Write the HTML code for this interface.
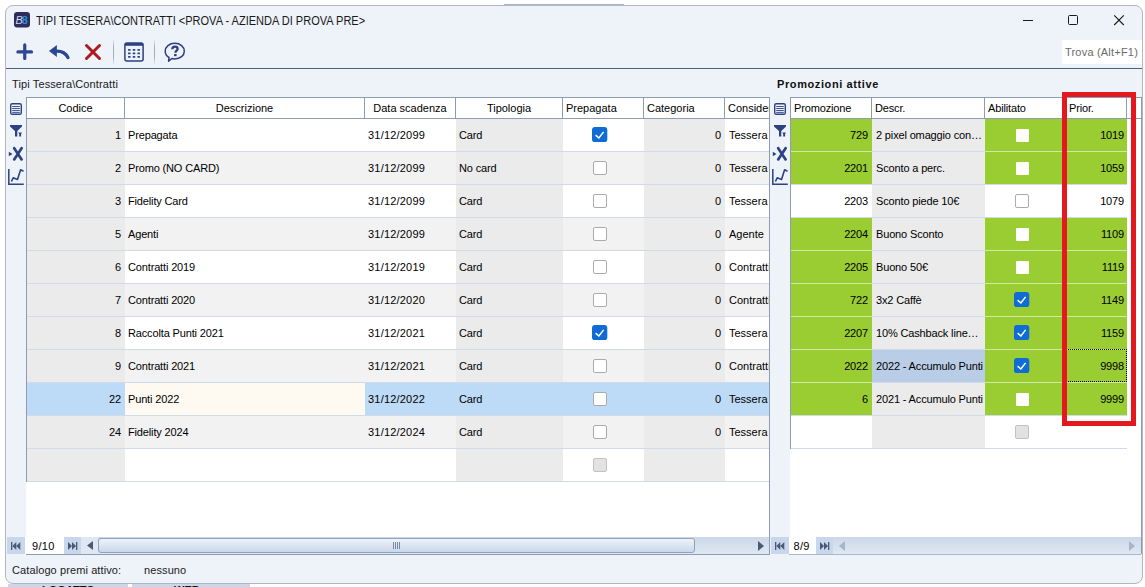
<!DOCTYPE html><html><head><meta charset="utf-8"><style>
html,body{margin:0;padding:0;}
body{width:1145px;height:587px;overflow:hidden;position:relative;background:#fff;font-family:"Liberation Sans", sans-serif;}
body div, body svg{position:absolute;}
</style></head><body>
<div style="left:8px;top:584px;width:120px;height:3px;background:#c6d8ee;"></div>
<div style="left:132px;top:584px;width:118px;height:3px;background:#c6d8ee;"></div>
<div style="left:8px;top:584px;width:120px;height:3px;overflow:hidden"><div style="left:34px;top:0.5px;font-size:11px;font-weight:700;line-height:11px;color:#111;white-space:pre">LOGATTO</div></div>
<div style="left:132px;top:584px;width:118px;height:3px;overflow:hidden"><div style="left:42px;top:0.5px;font-size:11px;font-weight:700;line-height:11px;color:#111;white-space:pre">WEB</div></div>
<div style="left:504px;top:4px;width:120px;height:2px;background:#a9b9d0;"></div>
<div style="left:5px;top:5px;width:1136px;height:577px;background:#eef2f9;border:1px solid #b3b6ba;border-radius:8px;"></div>
<svg style="left:14px;top:12px" width="16" height="16" viewBox="0 0 16 16">
<rect x="0" y="0" width="16" height="15.5" rx="3.2" fill="#2e2b5e"/>
<text x="1.6" y="12.2" font-family="Liberation Sans" font-size="11" font-style="italic" font-weight="400" fill="#d8d8e6">B</text>
<text x="7.8" y="12.2" font-family="Liberation Sans" font-size="11" font-weight="700" fill="#2590d8">8</text>
</svg>
<div style="left:36px;top:15px;font-size:12px;line-height:13px;color:#1a1a1a;font-weight:400;white-space:pre;transform:scaleX(0.918);transform-origin:0 0;">TIPI TESSERA\CONTRATTI &lt;PROVA - AZIENDA DI PROVA PRE&gt;</div>
<div style="left:1023px;top:20px;width:10px;height:1px;background:#1a1a1a;"></div>
<div style="left:1068px;top:15px;width:8px;height:8px;background:transparent;border:1px solid #1a1a1a;border-radius:1.5px;"></div>
<svg style="left:1113px;top:15px" width="12" height="11" viewBox="0 0 12 11"><path d="M1.2 0.4 L10.8 10 M10.8 0.4 L1.2 10" stroke="#1a1a1a" stroke-width="1.1"/></svg>
<svg style="left:12px;top:40px" width="28" height="24" viewBox="12 40 28 24"><path d="M24.75 44.9 V58.4 M17.9 51.9 H31.5" stroke="#2b4791" stroke-width="3.2" stroke-linecap="round"/></svg>
<svg style="left:44px;top:40px" width="30" height="24" viewBox="44 40 30 24"><path d="M48.9 51 L56.9 44.9 L56.9 56.9 Z" fill="#2b4791"/><path d="M56 51.1 C61.5 50.9 65.8 53 68 57.6" fill="none" stroke="#2b4791" stroke-width="3.3" stroke-linecap="round"/></svg>
<svg style="left:84px;top:43px" width="18" height="18" viewBox="0 0 18 18"><path d="M2.5 2.5 L15.5 15.5 M15.5 2.5 L2.5 15.5" stroke="#ad1b20" stroke-width="3" stroke-linecap="round"/></svg>
<div style="left:113px;top:40px;width:1px;height:24px;background:#a4adbb;background:linear-gradient(rgba(164,173,187,0.2),#a4adbb 30%,#a4adbb 70%,rgba(164,173,187,0.2));"></div>
<svg style="left:124px;top:42px" width="20" height="20" viewBox="0 0 20 20">
<rect x="0.9" y="0.9" width="18.2" height="18.2" rx="2" fill="none" stroke="#2d4283" stroke-width="1.5"/>
<rect x="1" y="1" width="18" height="2.8" fill="#2d4283"/>
<g fill="#2d4283"><rect x="4" y="6.9" width="2.6" height="1.8" rx="0.5"/><rect x="8.7" y="6.9" width="2.6" height="1.8" rx="0.5"/><rect x="13.4" y="6.9" width="2.6" height="1.8" rx="0.5"/>
<rect x="4" y="10.4" width="2.6" height="1.8" rx="0.5"/><rect x="8.7" y="10.4" width="2.6" height="1.8" rx="0.5"/><rect x="13.4" y="10.4" width="2.6" height="1.8" rx="0.5"/>
<rect x="4" y="14" width="2.6" height="1.8" rx="0.5"/><rect x="8.7" y="14" width="2.6" height="1.8" rx="0.5"/><rect x="13.4" y="14" width="2.6" height="1.8" rx="0.5"/></g>
</svg>
<div style="left:154px;top:40px;width:1px;height:24px;background:#a4adbb;background:linear-gradient(rgba(164,173,187,0.2),#a4adbb 30%,#a4adbb 70%,rgba(164,173,187,0.2));"></div>
<svg style="left:164px;top:42px" width="22" height="21" viewBox="0 0 22 21">
<path d="M5 15.5 C2.5 14 1.2 11.8 1.2 9.2 C1.2 4.8 5.3 1.3 10.8 1.3 C16.3 1.3 20.3 4.8 20.3 9.2 C20.3 13.6 16.3 16.9 10.8 16.9 C9.8 16.9 8.8 16.8 7.9 16.5 L4.6 19.2 Z" fill="none" stroke="#2d3f82" stroke-width="1.5" stroke-linejoin="round"/>
<path d="M8.3 7.3 C8.3 5.5 9.5 4.6 11 4.6 C12.5 4.6 13.6 5.6 13.6 6.9 C13.6 8.7 11.4 8.7 11.4 10.8" fill="none" stroke="#2d3f82" stroke-width="2.3"/>
<rect x="10.1" y="12" width="2.5" height="2.2" fill="#2d3f82"/>
</svg>
<div style="left:1062px;top:40px;width:80px;height:24px;background:#ffffff;"></div>
<div style="left:1065px;top:46px;font-size:11px;line-height:13px;color:#6b6b6b;font-weight:400;white-space:pre;letter-spacing:0.2px;">Trova (Alt+F1)</div>
<div style="left:6px;top:68px;width:1136px;height:1px;background:#4d617c;"></div>
<div style="left:12px;top:78px;font-size:11px;line-height:13px;color:#1a1a1a;font-weight:400;white-space:pre;letter-spacing:0.12px;">Tipi Tessera\Contratti</div>
<div style="left:777px;top:78px;font-size:11px;line-height:13px;color:#111;font-weight:700;white-space:pre;letter-spacing:0.6px;">Promozioni attive</div>
<svg style="left:5px;top:97px" width="22" height="92" viewBox="5 97 22 92">
<rect x="10.7" y="103.7" width="10.6" height="10.6" rx="1.6" fill="none" stroke="#2c4283" stroke-width="1.4"/>
<path d="M12.2 106.5 H19.8 M12.2 108.5 H19.8 M12.2 110.5 H19.8 M12.2 112.4 H19.8" stroke="#2c4283" stroke-width="0.9"/>
<path d="M10 125 H22 V126.6 L17.3 131 V136.5 H15 V131 L10 126.6 Z" fill="#2c4283"/>
<path d="M18.2 132.6 H22 L21.1 134 V136.5 H19.2 V134 Z" fill="#2c4283"/>
<path d="M8.8 151.8 L12.5 154 L8.8 156.2 Z" fill="#2c4283"/>
<path d="M14.2 148.2 L21.6 159.4 M21.6 148.2 L14.2 159.4" stroke="#2c4283" stroke-width="2.7" stroke-linecap="round"/>
<path d="M8.8 169 V184.3 H23.8" fill="none" stroke="#2c4283" stroke-width="1.5"/>
<path d="M11.4 181.5 L13.2 177.8 L17.5 179.4 L20.6 169.8 L23.5 171.2" fill="none" stroke="#2c4283" stroke-width="1.6" stroke-linejoin="round"/>
</svg>
<svg style="left:769px;top:97px" width="22" height="92" viewBox="5 97 22 92">
<rect x="10.7" y="103.7" width="10.6" height="10.6" rx="1.6" fill="none" stroke="#2c4283" stroke-width="1.4"/>
<path d="M12.2 106.5 H19.8 M12.2 108.5 H19.8 M12.2 110.5 H19.8 M12.2 112.4 H19.8" stroke="#2c4283" stroke-width="0.9"/>
<path d="M10 125 H22 V126.6 L17.3 131 V136.5 H15 V131 L10 126.6 Z" fill="#2c4283"/>
<path d="M18.2 132.6 H22 L21.1 134 V136.5 H19.2 V134 Z" fill="#2c4283"/>
<path d="M8.8 151.8 L12.5 154 L8.8 156.2 Z" fill="#2c4283"/>
<path d="M14.2 148.2 L21.6 159.4 M21.6 148.2 L14.2 159.4" stroke="#2c4283" stroke-width="2.7" stroke-linecap="round"/>
<path d="M8.8 169 V184.3 H23.8" fill="none" stroke="#2c4283" stroke-width="1.5"/>
<path d="M11.4 181.5 L13.2 177.8 L17.5 179.4 L20.6 169.8 L23.5 171.2" fill="none" stroke="#2c4283" stroke-width="1.6" stroke-linejoin="round"/>
</svg>
<div style="left:27px;top:119px;width:742px;height:418px;background:#ffffff;"></div>
<div style="left:27px;top:119px;width:98px;height:32px;background:#ebebeb;"></div>
<div style="left:125px;top:119px;width:240px;height:32px;background:#ffffff;"></div>
<div style="left:365px;top:119px;width:91px;height:32px;background:#ffffff;"></div>
<div style="left:456px;top:119px;width:107px;height:32px;background:#ebebeb;"></div>
<div style="left:563px;top:119px;width:81px;height:32px;background:#ffffff;"></div>
<div style="left:644px;top:119px;width:81px;height:32px;background:#ebebeb;"></div>
<div style="left:725px;top:119px;width:44px;height:32px;background:#ffffff;"></div>
<div style="left:27px;top:151px;width:742px;height:1px;background:#cfdbe9;"></div>
<div style="left:27px;top:152px;width:98px;height:32px;background:#ebebeb;"></div>
<div style="left:125px;top:152px;width:240px;height:32px;background:#f2f2f2;"></div>
<div style="left:365px;top:152px;width:91px;height:32px;background:#f2f2f2;"></div>
<div style="left:456px;top:152px;width:107px;height:32px;background:#ebebeb;"></div>
<div style="left:563px;top:152px;width:81px;height:32px;background:#f2f2f2;"></div>
<div style="left:644px;top:152px;width:81px;height:32px;background:#ebebeb;"></div>
<div style="left:725px;top:152px;width:44px;height:32px;background:#f2f2f2;"></div>
<div style="left:27px;top:184px;width:742px;height:1px;background:#cfdbe9;"></div>
<div style="left:27px;top:185px;width:98px;height:32px;background:#ebebeb;"></div>
<div style="left:125px;top:185px;width:240px;height:32px;background:#ffffff;"></div>
<div style="left:365px;top:185px;width:91px;height:32px;background:#ffffff;"></div>
<div style="left:456px;top:185px;width:107px;height:32px;background:#ebebeb;"></div>
<div style="left:563px;top:185px;width:81px;height:32px;background:#ffffff;"></div>
<div style="left:644px;top:185px;width:81px;height:32px;background:#ebebeb;"></div>
<div style="left:725px;top:185px;width:44px;height:32px;background:#ffffff;"></div>
<div style="left:27px;top:217px;width:742px;height:1px;background:#cfdbe9;"></div>
<div style="left:27px;top:218px;width:98px;height:32px;background:#ebebeb;"></div>
<div style="left:125px;top:218px;width:240px;height:32px;background:#f2f2f2;"></div>
<div style="left:365px;top:218px;width:91px;height:32px;background:#f2f2f2;"></div>
<div style="left:456px;top:218px;width:107px;height:32px;background:#ebebeb;"></div>
<div style="left:563px;top:218px;width:81px;height:32px;background:#f2f2f2;"></div>
<div style="left:644px;top:218px;width:81px;height:32px;background:#ebebeb;"></div>
<div style="left:725px;top:218px;width:44px;height:32px;background:#f2f2f2;"></div>
<div style="left:27px;top:250px;width:742px;height:1px;background:#cfdbe9;"></div>
<div style="left:27px;top:251px;width:98px;height:32px;background:#ebebeb;"></div>
<div style="left:125px;top:251px;width:240px;height:32px;background:#ffffff;"></div>
<div style="left:365px;top:251px;width:91px;height:32px;background:#ffffff;"></div>
<div style="left:456px;top:251px;width:107px;height:32px;background:#ebebeb;"></div>
<div style="left:563px;top:251px;width:81px;height:32px;background:#ffffff;"></div>
<div style="left:644px;top:251px;width:81px;height:32px;background:#ebebeb;"></div>
<div style="left:725px;top:251px;width:44px;height:32px;background:#ffffff;"></div>
<div style="left:27px;top:283px;width:742px;height:1px;background:#cfdbe9;"></div>
<div style="left:27px;top:284px;width:98px;height:32px;background:#ebebeb;"></div>
<div style="left:125px;top:284px;width:240px;height:32px;background:#f2f2f2;"></div>
<div style="left:365px;top:284px;width:91px;height:32px;background:#f2f2f2;"></div>
<div style="left:456px;top:284px;width:107px;height:32px;background:#ebebeb;"></div>
<div style="left:563px;top:284px;width:81px;height:32px;background:#f2f2f2;"></div>
<div style="left:644px;top:284px;width:81px;height:32px;background:#ebebeb;"></div>
<div style="left:725px;top:284px;width:44px;height:32px;background:#f2f2f2;"></div>
<div style="left:27px;top:316px;width:742px;height:1px;background:#cfdbe9;"></div>
<div style="left:27px;top:317px;width:98px;height:32px;background:#ebebeb;"></div>
<div style="left:125px;top:317px;width:240px;height:32px;background:#ffffff;"></div>
<div style="left:365px;top:317px;width:91px;height:32px;background:#ffffff;"></div>
<div style="left:456px;top:317px;width:107px;height:32px;background:#ebebeb;"></div>
<div style="left:563px;top:317px;width:81px;height:32px;background:#ffffff;"></div>
<div style="left:644px;top:317px;width:81px;height:32px;background:#ebebeb;"></div>
<div style="left:725px;top:317px;width:44px;height:32px;background:#ffffff;"></div>
<div style="left:27px;top:349px;width:742px;height:1px;background:#cfdbe9;"></div>
<div style="left:27px;top:350px;width:98px;height:32px;background:#ebebeb;"></div>
<div style="left:125px;top:350px;width:240px;height:32px;background:#f2f2f2;"></div>
<div style="left:365px;top:350px;width:91px;height:32px;background:#f2f2f2;"></div>
<div style="left:456px;top:350px;width:107px;height:32px;background:#ebebeb;"></div>
<div style="left:563px;top:350px;width:81px;height:32px;background:#f2f2f2;"></div>
<div style="left:644px;top:350px;width:81px;height:32px;background:#ebebeb;"></div>
<div style="left:725px;top:350px;width:44px;height:32px;background:#f2f2f2;"></div>
<div style="left:27px;top:382px;width:742px;height:1px;background:#cfdbe9;"></div>
<div style="left:27px;top:383px;width:98px;height:32px;background:#bddaf6;"></div>
<div style="left:125px;top:383px;width:240px;height:32px;background:#fef9f1;"></div>
<div style="left:365px;top:383px;width:91px;height:32px;background:#bddaf6;"></div>
<div style="left:456px;top:383px;width:107px;height:32px;background:#bddaf6;"></div>
<div style="left:563px;top:383px;width:81px;height:32px;background:#bddaf6;"></div>
<div style="left:644px;top:383px;width:81px;height:32px;background:#bddaf6;"></div>
<div style="left:725px;top:383px;width:44px;height:32px;background:#bddaf6;"></div>
<div style="left:27px;top:415px;width:742px;height:1px;background:#cfdbe9;"></div>
<div style="left:27px;top:416px;width:98px;height:32px;background:#ebebeb;"></div>
<div style="left:125px;top:416px;width:240px;height:32px;background:#f2f2f2;"></div>
<div style="left:365px;top:416px;width:91px;height:32px;background:#f2f2f2;"></div>
<div style="left:456px;top:416px;width:107px;height:32px;background:#ebebeb;"></div>
<div style="left:563px;top:416px;width:81px;height:32px;background:#f2f2f2;"></div>
<div style="left:644px;top:416px;width:81px;height:32px;background:#ebebeb;"></div>
<div style="left:725px;top:416px;width:44px;height:32px;background:#f2f2f2;"></div>
<div style="left:27px;top:448px;width:742px;height:1px;background:#cfdbe9;"></div>
<div style="left:27px;top:449px;width:98px;height:32px;background:#ebebeb;"></div>
<div style="left:125px;top:449px;width:240px;height:32px;background:#ffffff;"></div>
<div style="left:365px;top:449px;width:91px;height:32px;background:#ffffff;"></div>
<div style="left:456px;top:449px;width:107px;height:32px;background:#ebebeb;"></div>
<div style="left:563px;top:449px;width:81px;height:32px;background:#ffffff;"></div>
<div style="left:644px;top:449px;width:81px;height:32px;background:#ebebeb;"></div>
<div style="left:725px;top:449px;width:44px;height:32px;background:#ffffff;"></div>
<div style="left:27px;top:481px;width:742px;height:1px;background:#cfdbe9;"></div>
<div style="left:27px;top:119px;width:742px;height:418px;overflow:hidden">
<div style="left:4px;width:90px;text-align:right;top:10px;font-size:11px;line-height:13px;color:#000;font-weight:400;white-space:pre;letter-spacing:-0.15px;">1</div>
<div style="left:101px;top:10px;font-size:11px;line-height:13px;color:#000;font-weight:400;white-space:pre;letter-spacing:-0.15px;">Prepagata</div>
<div style="left:341px;top:10px;font-size:11px;line-height:13px;color:#000;font-weight:400;white-space:pre;letter-spacing:0.2px;">31/12/2099</div>
<div style="left:432px;top:10px;font-size:11px;line-height:13px;color:#000;font-weight:400;white-space:pre;letter-spacing:-0.15px;">Card</div>
<div style="left:634px;width:60px;text-align:right;top:10px;font-size:11px;line-height:13px;color:#000;font-weight:400;white-space:pre;letter-spacing:-0.15px;">0</div>
<div style="left:702px;top:10px;font-size:11px;line-height:13px;color:#000;font-weight:400;white-space:pre;letter-spacing:0px;">Tessera</div>
<div style="left:4px;width:90px;text-align:right;top:43px;font-size:11px;line-height:13px;color:#000;font-weight:400;white-space:pre;letter-spacing:-0.15px;">2</div>
<div style="left:101px;top:43px;font-size:11px;line-height:13px;color:#000;font-weight:400;white-space:pre;letter-spacing:-0.15px;">Promo (NO CARD)</div>
<div style="left:341px;top:43px;font-size:11px;line-height:13px;color:#000;font-weight:400;white-space:pre;letter-spacing:0.2px;">31/12/2099</div>
<div style="left:432px;top:43px;font-size:11px;line-height:13px;color:#000;font-weight:400;white-space:pre;letter-spacing:-0.15px;">No card</div>
<div style="left:634px;width:60px;text-align:right;top:43px;font-size:11px;line-height:13px;color:#000;font-weight:400;white-space:pre;letter-spacing:-0.15px;">0</div>
<div style="left:702px;top:43px;font-size:11px;line-height:13px;color:#000;font-weight:400;white-space:pre;letter-spacing:0px;">Tessera</div>
<div style="left:4px;width:90px;text-align:right;top:76px;font-size:11px;line-height:13px;color:#000;font-weight:400;white-space:pre;letter-spacing:-0.15px;">3</div>
<div style="left:101px;top:76px;font-size:11px;line-height:13px;color:#000;font-weight:400;white-space:pre;letter-spacing:-0.15px;">Fidelity Card</div>
<div style="left:341px;top:76px;font-size:11px;line-height:13px;color:#000;font-weight:400;white-space:pre;letter-spacing:0.2px;">31/12/2099</div>
<div style="left:432px;top:76px;font-size:11px;line-height:13px;color:#000;font-weight:400;white-space:pre;letter-spacing:-0.15px;">Card</div>
<div style="left:634px;width:60px;text-align:right;top:76px;font-size:11px;line-height:13px;color:#000;font-weight:400;white-space:pre;letter-spacing:-0.15px;">0</div>
<div style="left:702px;top:76px;font-size:11px;line-height:13px;color:#000;font-weight:400;white-space:pre;letter-spacing:0px;">Tessera</div>
<div style="left:4px;width:90px;text-align:right;top:109px;font-size:11px;line-height:13px;color:#000;font-weight:400;white-space:pre;letter-spacing:-0.15px;">5</div>
<div style="left:101px;top:109px;font-size:11px;line-height:13px;color:#000;font-weight:400;white-space:pre;letter-spacing:-0.15px;">Agenti</div>
<div style="left:341px;top:109px;font-size:11px;line-height:13px;color:#000;font-weight:400;white-space:pre;letter-spacing:0.2px;">31/12/2099</div>
<div style="left:432px;top:109px;font-size:11px;line-height:13px;color:#000;font-weight:400;white-space:pre;letter-spacing:-0.15px;">Card</div>
<div style="left:634px;width:60px;text-align:right;top:109px;font-size:11px;line-height:13px;color:#000;font-weight:400;white-space:pre;letter-spacing:-0.15px;">0</div>
<div style="left:702px;top:109px;font-size:11px;line-height:13px;color:#000;font-weight:400;white-space:pre;letter-spacing:0px;">Agente</div>
<div style="left:4px;width:90px;text-align:right;top:142px;font-size:11px;line-height:13px;color:#000;font-weight:400;white-space:pre;letter-spacing:-0.15px;">6</div>
<div style="left:101px;top:142px;font-size:11px;line-height:13px;color:#000;font-weight:400;white-space:pre;letter-spacing:-0.15px;">Contratti 2019</div>
<div style="left:341px;top:142px;font-size:11px;line-height:13px;color:#000;font-weight:400;white-space:pre;letter-spacing:0.2px;">31/12/2019</div>
<div style="left:432px;top:142px;font-size:11px;line-height:13px;color:#000;font-weight:400;white-space:pre;letter-spacing:-0.15px;">Card</div>
<div style="left:634px;width:60px;text-align:right;top:142px;font-size:11px;line-height:13px;color:#000;font-weight:400;white-space:pre;letter-spacing:-0.15px;">0</div>
<div style="left:702px;top:142px;font-size:11px;line-height:13px;color:#000;font-weight:400;white-space:pre;letter-spacing:0px;">Contratti</div>
<div style="left:4px;width:90px;text-align:right;top:175px;font-size:11px;line-height:13px;color:#000;font-weight:400;white-space:pre;letter-spacing:-0.15px;">7</div>
<div style="left:101px;top:175px;font-size:11px;line-height:13px;color:#000;font-weight:400;white-space:pre;letter-spacing:-0.15px;">Contratti 2020</div>
<div style="left:341px;top:175px;font-size:11px;line-height:13px;color:#000;font-weight:400;white-space:pre;letter-spacing:0.2px;">31/12/2020</div>
<div style="left:432px;top:175px;font-size:11px;line-height:13px;color:#000;font-weight:400;white-space:pre;letter-spacing:-0.15px;">Card</div>
<div style="left:634px;width:60px;text-align:right;top:175px;font-size:11px;line-height:13px;color:#000;font-weight:400;white-space:pre;letter-spacing:-0.15px;">0</div>
<div style="left:702px;top:175px;font-size:11px;line-height:13px;color:#000;font-weight:400;white-space:pre;letter-spacing:0px;">Contratti</div>
<div style="left:4px;width:90px;text-align:right;top:208px;font-size:11px;line-height:13px;color:#000;font-weight:400;white-space:pre;letter-spacing:-0.15px;">8</div>
<div style="left:101px;top:208px;font-size:11px;line-height:13px;color:#000;font-weight:400;white-space:pre;letter-spacing:-0.15px;">Raccolta Punti 2021</div>
<div style="left:341px;top:208px;font-size:11px;line-height:13px;color:#000;font-weight:400;white-space:pre;letter-spacing:0.2px;">31/12/2021</div>
<div style="left:432px;top:208px;font-size:11px;line-height:13px;color:#000;font-weight:400;white-space:pre;letter-spacing:-0.15px;">Card</div>
<div style="left:634px;width:60px;text-align:right;top:208px;font-size:11px;line-height:13px;color:#000;font-weight:400;white-space:pre;letter-spacing:-0.15px;">0</div>
<div style="left:702px;top:208px;font-size:11px;line-height:13px;color:#000;font-weight:400;white-space:pre;letter-spacing:0px;">Tessera</div>
<div style="left:4px;width:90px;text-align:right;top:241px;font-size:11px;line-height:13px;color:#000;font-weight:400;white-space:pre;letter-spacing:-0.15px;">9</div>
<div style="left:101px;top:241px;font-size:11px;line-height:13px;color:#000;font-weight:400;white-space:pre;letter-spacing:-0.15px;">Contratti 2021</div>
<div style="left:341px;top:241px;font-size:11px;line-height:13px;color:#000;font-weight:400;white-space:pre;letter-spacing:0.2px;">31/12/2021</div>
<div style="left:432px;top:241px;font-size:11px;line-height:13px;color:#000;font-weight:400;white-space:pre;letter-spacing:-0.15px;">Card</div>
<div style="left:634px;width:60px;text-align:right;top:241px;font-size:11px;line-height:13px;color:#000;font-weight:400;white-space:pre;letter-spacing:-0.15px;">0</div>
<div style="left:702px;top:241px;font-size:11px;line-height:13px;color:#000;font-weight:400;white-space:pre;letter-spacing:0px;">Contratti</div>
<div style="left:4px;width:90px;text-align:right;top:274px;font-size:11px;line-height:13px;color:#000;font-weight:400;white-space:pre;letter-spacing:-0.15px;">22</div>
<div style="left:101px;top:274px;font-size:11px;line-height:13px;color:#000;font-weight:400;white-space:pre;letter-spacing:-0.15px;">Punti 2022</div>
<div style="left:341px;top:274px;font-size:11px;line-height:13px;color:#000;font-weight:400;white-space:pre;letter-spacing:0.2px;">31/12/2022</div>
<div style="left:432px;top:274px;font-size:11px;line-height:13px;color:#000;font-weight:400;white-space:pre;letter-spacing:-0.15px;">Card</div>
<div style="left:634px;width:60px;text-align:right;top:274px;font-size:11px;line-height:13px;color:#000;font-weight:400;white-space:pre;letter-spacing:-0.15px;">0</div>
<div style="left:702px;top:274px;font-size:11px;line-height:13px;color:#000;font-weight:400;white-space:pre;letter-spacing:0px;">Tessera</div>
<div style="left:4px;width:90px;text-align:right;top:307px;font-size:11px;line-height:13px;color:#000;font-weight:400;white-space:pre;letter-spacing:-0.15px;">24</div>
<div style="left:101px;top:307px;font-size:11px;line-height:13px;color:#000;font-weight:400;white-space:pre;letter-spacing:-0.15px;">Fidelity 2024</div>
<div style="left:341px;top:307px;font-size:11px;line-height:13px;color:#000;font-weight:400;white-space:pre;letter-spacing:0.2px;">31/12/2024</div>
<div style="left:432px;top:307px;font-size:11px;line-height:13px;color:#000;font-weight:400;white-space:pre;letter-spacing:-0.15px;">Card</div>
<div style="left:634px;width:60px;text-align:right;top:307px;font-size:11px;line-height:13px;color:#000;font-weight:400;white-space:pre;letter-spacing:-0.15px;">0</div>
<div style="left:702px;top:307px;font-size:11px;line-height:13px;color:#000;font-weight:400;white-space:pre;letter-spacing:0px;">Tessera</div>
</div>
<svg style="left:592.3px;top:127.2px" width="15.3" height="15.3" viewBox="0 0 15.3 15.3"><rect x="0" y="0" width="15.3" height="15.3" rx="3" fill="#0f6cd5"/><path d="M3.6 8.1 L6.9 11 L11.6 4.9" fill="none" stroke="#fff" stroke-width="1.5"/></svg>
<div style="left:593px;top:161px;width:12px;height:12px;background:#fff;border:1px solid #ababab;border-radius:2px"></div>
<div style="left:593px;top:194px;width:12px;height:12px;background:#fff;border:1px solid #ababab;border-radius:2px"></div>
<div style="left:593px;top:227px;width:12px;height:12px;background:#fff;border:1px solid #ababab;border-radius:2px"></div>
<div style="left:593px;top:260px;width:12px;height:12px;background:#fff;border:1px solid #ababab;border-radius:2px"></div>
<div style="left:593px;top:293px;width:12px;height:12px;background:#fff;border:1px solid #ababab;border-radius:2px"></div>
<svg style="left:592.3px;top:325.2px" width="15.3" height="15.3" viewBox="0 0 15.3 15.3"><rect x="0" y="0" width="15.3" height="15.3" rx="3" fill="#0f6cd5"/><path d="M3.6 8.1 L6.9 11 L11.6 4.9" fill="none" stroke="#fff" stroke-width="1.5"/></svg>
<div style="left:593px;top:359px;width:12px;height:12px;background:#fff;border:1px solid #ababab;border-radius:2px"></div>
<div style="left:593px;top:392px;width:12px;height:12px;background:#fff;border:1px solid #ababab;border-radius:2px"></div>
<div style="left:593px;top:425px;width:12px;height:12px;background:#fff;border:1px solid #ababab;border-radius:2px"></div>
<div style="left:593px;top:458px;width:12px;height:12px;background:#e2e2e2;border:1px solid #c2c2c2;border-radius:2px"></div>
<div style="left:26px;top:97px;width:743px;height:22px;background:#ffffff;border-top:1px solid #8c9db3;border-bottom:1px solid #8c9db3;box-sizing:border-box;"></div>
<div style="left:26px;top:97px;width:1px;height:22px;background:#8c9db3;"></div>
<div style="left:124px;top:97px;width:1px;height:22px;background:#8c9db3;"></div>
<div style="left:364px;top:97px;width:1px;height:22px;background:#8c9db3;"></div>
<div style="left:455px;top:97px;width:1px;height:22px;background:#8c9db3;"></div>
<div style="left:562px;top:97px;width:1px;height:22px;background:#8c9db3;"></div>
<div style="left:643px;top:97px;width:1px;height:22px;background:#8c9db3;"></div>
<div style="left:724px;top:97px;width:1px;height:22px;background:#8c9db3;"></div>
<div style="left:769px;top:97px;width:1px;height:22px;background:#8c9db3;"></div>
<div style="left:27px;top:98px;width:742px;height:20px;overflow:hidden">
<div style="left:0px;width:97px;text-align:center;top:4px;font-size:11px;line-height:13px;color:#000;font-weight:400;white-space:pre;letter-spacing:0px;">Codice</div>
<div style="left:98px;width:239px;text-align:center;top:4px;font-size:11px;line-height:13px;color:#000;font-weight:400;white-space:pre;letter-spacing:0px;">Descrizione</div>
<div style="left:338px;width:90px;text-align:center;top:4px;font-size:11px;line-height:13px;color:#000;font-weight:400;white-space:pre;letter-spacing:0px;">Data scadenza</div>
<div style="left:429px;width:106px;text-align:center;top:4px;font-size:11px;line-height:13px;color:#000;font-weight:400;white-space:pre;letter-spacing:0px;">Tipologia</div>
<div style="left:539px;top:4px;font-size:11px;line-height:13px;color:#000;font-weight:400;white-space:pre;letter-spacing:0px;">Prepagata</div>
<div style="left:620px;top:4px;font-size:11px;line-height:13px;color:#000;font-weight:400;white-space:pre;letter-spacing:0px;">Categoria</div>
<div style="left:701px;top:4px;font-size:11px;line-height:13px;color:#000;font-weight:400;white-space:pre;letter-spacing:0px;">Consider</div>
</div>
<div style="left:26px;top:97px;width:1px;height:385px;background:#8c9db3;"></div>
<div style="left:769px;top:97px;width:1px;height:457px;background:#8c9db3;"></div>
<div style="left:26px;top:482px;width:743px;height:55px;background:#ffffff;"></div>
<div style="left:791px;top:119px;width:350px;height:418px;background:#ffffff;"></div>
<div style="left:791px;top:119px;width:81px;height:32px;background:#9acd32;"></div>
<div style="left:872px;top:119px;width:113px;height:32px;background:#ebebeb;"></div>
<div style="left:985px;top:119px;width:81px;height:32px;background:#9acd32;"></div>
<div style="left:1066px;top:119px;width:61px;height:32px;background:#9acd32;"></div>
<div style="left:791px;top:151px;width:81px;height:1px;background:#d0e7a6;"></div>
<div style="left:872px;top:151px;width:113px;height:1px;background:#cfdbe9;"></div>
<div style="left:985px;top:151px;width:142px;height:1px;background:#d0e7a6;"></div>
<div style="left:791px;top:152px;width:81px;height:32px;background:#9acd32;"></div>
<div style="left:872px;top:152px;width:113px;height:32px;background:#ebebeb;"></div>
<div style="left:985px;top:152px;width:81px;height:32px;background:#9acd32;"></div>
<div style="left:1066px;top:152px;width:61px;height:32px;background:#9acd32;"></div>
<div style="left:791px;top:184px;width:81px;height:1px;background:#cfdbe9;"></div>
<div style="left:872px;top:184px;width:113px;height:1px;background:#cfdbe9;"></div>
<div style="left:985px;top:184px;width:142px;height:1px;background:#cfdbe9;"></div>
<div style="left:791px;top:185px;width:81px;height:32px;background:#ffffff;"></div>
<div style="left:872px;top:185px;width:113px;height:32px;background:#ebebeb;"></div>
<div style="left:985px;top:185px;width:81px;height:32px;background:#ffffff;"></div>
<div style="left:1066px;top:185px;width:61px;height:32px;background:#ffffff;"></div>
<div style="left:791px;top:217px;width:81px;height:1px;background:#cfdbe9;"></div>
<div style="left:872px;top:217px;width:113px;height:1px;background:#cfdbe9;"></div>
<div style="left:985px;top:217px;width:142px;height:1px;background:#cfdbe9;"></div>
<div style="left:791px;top:218px;width:81px;height:32px;background:#9acd32;"></div>
<div style="left:872px;top:218px;width:113px;height:32px;background:#ebebeb;"></div>
<div style="left:985px;top:218px;width:81px;height:32px;background:#9acd32;"></div>
<div style="left:1066px;top:218px;width:61px;height:32px;background:#9acd32;"></div>
<div style="left:791px;top:250px;width:81px;height:1px;background:#d0e7a6;"></div>
<div style="left:872px;top:250px;width:113px;height:1px;background:#cfdbe9;"></div>
<div style="left:985px;top:250px;width:142px;height:1px;background:#d0e7a6;"></div>
<div style="left:791px;top:251px;width:81px;height:32px;background:#9acd32;"></div>
<div style="left:872px;top:251px;width:113px;height:32px;background:#ebebeb;"></div>
<div style="left:985px;top:251px;width:81px;height:32px;background:#9acd32;"></div>
<div style="left:1066px;top:251px;width:61px;height:32px;background:#9acd32;"></div>
<div style="left:791px;top:283px;width:81px;height:1px;background:#d0e7a6;"></div>
<div style="left:872px;top:283px;width:113px;height:1px;background:#cfdbe9;"></div>
<div style="left:985px;top:283px;width:142px;height:1px;background:#d0e7a6;"></div>
<div style="left:791px;top:284px;width:81px;height:32px;background:#9acd32;"></div>
<div style="left:872px;top:284px;width:113px;height:32px;background:#ebebeb;"></div>
<div style="left:985px;top:284px;width:81px;height:32px;background:#9acd32;"></div>
<div style="left:1066px;top:284px;width:61px;height:32px;background:#9acd32;"></div>
<div style="left:791px;top:316px;width:81px;height:1px;background:#d0e7a6;"></div>
<div style="left:872px;top:316px;width:113px;height:1px;background:#cfdbe9;"></div>
<div style="left:985px;top:316px;width:142px;height:1px;background:#d0e7a6;"></div>
<div style="left:791px;top:317px;width:81px;height:32px;background:#9acd32;"></div>
<div style="left:872px;top:317px;width:113px;height:32px;background:#ebebeb;"></div>
<div style="left:985px;top:317px;width:81px;height:32px;background:#9acd32;"></div>
<div style="left:1066px;top:317px;width:61px;height:32px;background:#9acd32;"></div>
<div style="left:791px;top:349px;width:81px;height:1px;background:#d0e7a6;"></div>
<div style="left:872px;top:349px;width:113px;height:1px;background:#cfdbe9;"></div>
<div style="left:985px;top:349px;width:142px;height:1px;background:#d0e7a6;"></div>
<div style="left:791px;top:350px;width:81px;height:32px;background:#9acd32;"></div>
<div style="left:872px;top:350px;width:113px;height:32px;background:#b9cee6;"></div>
<div style="left:985px;top:350px;width:81px;height:32px;background:#9acd32;"></div>
<div style="left:1066px;top:350px;width:61px;height:32px;background:#9acd32;"></div>
<div style="left:791px;top:382px;width:81px;height:1px;background:#d0e7a6;"></div>
<div style="left:872px;top:382px;width:113px;height:1px;background:#cfdbe9;"></div>
<div style="left:985px;top:382px;width:142px;height:1px;background:#d0e7a6;"></div>
<div style="left:791px;top:383px;width:81px;height:32px;background:#9acd32;"></div>
<div style="left:872px;top:383px;width:113px;height:32px;background:#ebebeb;"></div>
<div style="left:985px;top:383px;width:81px;height:32px;background:#9acd32;"></div>
<div style="left:1066px;top:383px;width:61px;height:32px;background:#9acd32;"></div>
<div style="left:791px;top:415px;width:81px;height:1px;background:#cfdbe9;"></div>
<div style="left:872px;top:415px;width:113px;height:1px;background:#cfdbe9;"></div>
<div style="left:985px;top:415px;width:142px;height:1px;background:#cfdbe9;"></div>
<div style="left:791px;top:416px;width:81px;height:32px;background:#ffffff;"></div>
<div style="left:872px;top:416px;width:113px;height:32px;background:#ebebeb;"></div>
<div style="left:985px;top:416px;width:81px;height:32px;background:#ffffff;"></div>
<div style="left:1066px;top:416px;width:61px;height:32px;background:#ffffff;"></div>
<div style="left:791px;top:448px;width:81px;height:1px;background:#cfdbe9;"></div>
<div style="left:872px;top:448px;width:113px;height:1px;background:#cfdbe9;"></div>
<div style="left:985px;top:448px;width:142px;height:1px;background:#cfdbe9;"></div>
<div style="left:798px;width:70px;text-align:right;top:129px;font-size:11px;line-height:13px;color:#000;font-weight:400;white-space:pre;letter-spacing:-0.15px;">729</div>
<div style="left:876px;top:129px;font-size:11px;line-height:13px;color:#000;font-weight:400;white-space:pre;letter-spacing:-0.15px;">2 pixel omaggio con…</div>
<div style="left:1074px;width:50px;text-align:right;top:129px;font-size:11px;line-height:13px;color:#000;font-weight:400;white-space:pre;letter-spacing:-0.15px;">1019</div>
<div style="left:1015.5px;top:128.5px;width:13px;height:13px;background:#fff;border-radius:1px"></div>
<div style="left:798px;width:70px;text-align:right;top:162px;font-size:11px;line-height:13px;color:#000;font-weight:400;white-space:pre;letter-spacing:-0.15px;">2201</div>
<div style="left:876px;top:162px;font-size:11px;line-height:13px;color:#000;font-weight:400;white-space:pre;letter-spacing:-0.15px;">Sconto a perc.</div>
<div style="left:1074px;width:50px;text-align:right;top:162px;font-size:11px;line-height:13px;color:#000;font-weight:400;white-space:pre;letter-spacing:-0.15px;">1059</div>
<div style="left:1015.5px;top:161.5px;width:13px;height:13px;background:#fff;border-radius:1px"></div>
<div style="left:798px;width:70px;text-align:right;top:195px;font-size:11px;line-height:13px;color:#000;font-weight:400;white-space:pre;letter-spacing:-0.15px;">2203</div>
<div style="left:876px;top:195px;font-size:11px;line-height:13px;color:#000;font-weight:400;white-space:pre;letter-spacing:-0.15px;">Sconto piede 10€</div>
<div style="left:1074px;width:50px;text-align:right;top:195px;font-size:11px;line-height:13px;color:#000;font-weight:400;white-space:pre;letter-spacing:-0.15px;">1079</div>
<div style="left:1015px;top:194px;width:12px;height:12px;background:#fff;border:1px solid #ababab;border-radius:2px"></div>
<div style="left:798px;width:70px;text-align:right;top:228px;font-size:11px;line-height:13px;color:#000;font-weight:400;white-space:pre;letter-spacing:-0.15px;">2204</div>
<div style="left:876px;top:228px;font-size:11px;line-height:13px;color:#000;font-weight:400;white-space:pre;letter-spacing:-0.15px;">Buono Sconto</div>
<div style="left:1074px;width:50px;text-align:right;top:228px;font-size:11px;line-height:13px;color:#000;font-weight:400;white-space:pre;letter-spacing:-0.15px;">1109</div>
<div style="left:1015.5px;top:227.5px;width:13px;height:13px;background:#fff;border-radius:1px"></div>
<div style="left:798px;width:70px;text-align:right;top:261px;font-size:11px;line-height:13px;color:#000;font-weight:400;white-space:pre;letter-spacing:-0.15px;">2205</div>
<div style="left:876px;top:261px;font-size:11px;line-height:13px;color:#000;font-weight:400;white-space:pre;letter-spacing:-0.15px;">Buono 50€</div>
<div style="left:1074px;width:50px;text-align:right;top:261px;font-size:11px;line-height:13px;color:#000;font-weight:400;white-space:pre;letter-spacing:-0.15px;">1119</div>
<div style="left:1015.5px;top:260.5px;width:13px;height:13px;background:#fff;border-radius:1px"></div>
<div style="left:798px;width:70px;text-align:right;top:294px;font-size:11px;line-height:13px;color:#000;font-weight:400;white-space:pre;letter-spacing:-0.15px;">722</div>
<div style="left:876px;top:294px;font-size:11px;line-height:13px;color:#000;font-weight:400;white-space:pre;letter-spacing:-0.15px;">3x2 Caffè</div>
<div style="left:1074px;width:50px;text-align:right;top:294px;font-size:11px;line-height:13px;color:#000;font-weight:400;white-space:pre;letter-spacing:-0.15px;">1149</div>
<svg style="left:1014.3px;top:292.2px" width="15.3" height="15.3" viewBox="0 0 15.3 15.3"><rect x="0" y="0" width="15.3" height="15.3" rx="3" fill="#0f6cd5"/><path d="M3.6 8.1 L6.9 11 L11.6 4.9" fill="none" stroke="#fff" stroke-width="1.5"/></svg>
<div style="left:798px;width:70px;text-align:right;top:327px;font-size:11px;line-height:13px;color:#000;font-weight:400;white-space:pre;letter-spacing:-0.15px;">2207</div>
<div style="left:876px;top:327px;font-size:11px;line-height:13px;color:#000;font-weight:400;white-space:pre;letter-spacing:-0.15px;">10% Cashback line…</div>
<div style="left:1074px;width:50px;text-align:right;top:327px;font-size:11px;line-height:13px;color:#000;font-weight:400;white-space:pre;letter-spacing:-0.15px;">1159</div>
<svg style="left:1014.3px;top:325.2px" width="15.3" height="15.3" viewBox="0 0 15.3 15.3"><rect x="0" y="0" width="15.3" height="15.3" rx="3" fill="#0f6cd5"/><path d="M3.6 8.1 L6.9 11 L11.6 4.9" fill="none" stroke="#fff" stroke-width="1.5"/></svg>
<div style="left:798px;width:70px;text-align:right;top:360px;font-size:11px;line-height:13px;color:#000;font-weight:400;white-space:pre;letter-spacing:-0.15px;">2022</div>
<div style="left:876px;top:360px;font-size:11px;line-height:13px;color:#000;font-weight:400;white-space:pre;letter-spacing:-0.15px;">2022 - Accumulo Punti</div>
<div style="left:1074px;width:50px;text-align:right;top:360px;font-size:11px;line-height:13px;color:#000;font-weight:400;white-space:pre;letter-spacing:-0.15px;">9998</div>
<svg style="left:1014.3px;top:358.2px" width="15.3" height="15.3" viewBox="0 0 15.3 15.3"><rect x="0" y="0" width="15.3" height="15.3" rx="3" fill="#0f6cd5"/><path d="M3.6 8.1 L6.9 11 L11.6 4.9" fill="none" stroke="#fff" stroke-width="1.5"/></svg>
<div style="left:798px;width:70px;text-align:right;top:393px;font-size:11px;line-height:13px;color:#000;font-weight:400;white-space:pre;letter-spacing:-0.15px;">6</div>
<div style="left:876px;top:393px;font-size:11px;line-height:13px;color:#000;font-weight:400;white-space:pre;letter-spacing:-0.15px;">2021 - Accumulo Punti</div>
<div style="left:1074px;width:50px;text-align:right;top:393px;font-size:11px;line-height:13px;color:#000;font-weight:400;white-space:pre;letter-spacing:-0.15px;">9999</div>
<div style="left:1015.5px;top:392.5px;width:13px;height:13px;background:#fff;border-radius:1px"></div>
<div style="left:1015px;top:425px;width:12px;height:12px;background:#e2e2e2;border:1px solid #c2c2c2;border-radius:2px"></div>
<div style="left:1066px;top:349px;width:61px;height:33px;background:transparent;border:1px dotted #000;box-sizing:border-box;"></div>
<div style="left:790px;top:97px;width:351px;height:22px;background:#ffffff;border-top:1px solid #8c9db3;border-bottom:1px solid #8c9db3;box-sizing:border-box;"></div>
<div style="left:790px;top:97px;width:1px;height:22px;background:#8c9db3;"></div>
<div style="left:871px;top:97px;width:1px;height:22px;background:#8c9db3;"></div>
<div style="left:984px;top:97px;width:1px;height:22px;background:#8c9db3;"></div>
<div style="left:1065px;top:97px;width:1px;height:22px;background:#8c9db3;"></div>
<div style="left:1126px;top:97px;width:1px;height:22px;background:#8c9db3;"></div>
<div style="left:1141px;top:97px;width:1px;height:22px;background:#8c9db3;"></div>
<div style="left:794px;top:102px;font-size:11px;line-height:13px;color:#000;font-weight:400;white-space:pre;letter-spacing:-0.15px;">Promozione</div>
<div style="left:875px;top:102px;font-size:11px;line-height:13px;color:#000;font-weight:400;white-space:pre;letter-spacing:-0.15px;">Descr.</div>
<div style="left:988px;top:102px;font-size:11px;line-height:13px;color:#000;font-weight:400;white-space:pre;letter-spacing:-0.15px;">Abilitato</div>
<div style="left:1069px;top:102px;font-size:11px;line-height:13px;color:#000;font-weight:400;white-space:pre;letter-spacing:-0.15px;">Prior.</div>
<div style="left:790px;top:97px;width:1px;height:352px;background:#8c9db3;"></div>
<div style="left:790px;top:449px;width:351px;height:88px;background:#ffffff;"></div>
<div style="left:1141px;top:97px;width:1px;height:457px;background:#8c9db3;"></div>
<div style="left:1062px;top:92px;width:74px;height:334px;background:transparent;border:5px solid #e3191f;box-sizing:border-box;"></div>
<div style="left:7px;top:537px;width:762px;height:17px;background:#dce5f1;background:linear-gradient(#cbd8e9,#dfe8f3);"></div>
<div style="left:7px;top:537px;width:18px;height:17px;background:#c8d7eb;"></div>
<svg style="left:11px;top:542px" width="10" height="8" viewBox="0 0 10 8"><rect x="0" y="0" width="1.3" height="8" fill="#4a5a76"/><path d="M5.3 0 L1.3 4 L5.3 8 Z M9.3 0 L5.3 4 L9.3 8 Z" fill="#4a5a76"/></svg>
<div style="left:25px;top:537px;width:39px;height:17px;background:#ffffff;"></div>
<div style="left:32px;top:540px;font-size:11px;line-height:13px;color:#000;font-weight:400;white-space:pre;letter-spacing:0.3px;">9/10</div>
<div style="left:64px;top:537px;width:17px;height:17px;background:#c8d7eb;"></div>
<svg style="left:68px;top:542px" width="10" height="8" viewBox="0 0 10 8"><path d="M0 0 L4 4 L0 8 Z M4 0 L8 4 L4 8 Z" fill="#4a5a76"/><rect x="8" y="0" width="1.3" height="8" fill="#4a5a76"/></svg>
<div style="left:81px;top:537px;width:17px;height:17px;background:#dfe7f2;"></div>
<svg style="left:86.5px;top:541px" width="6" height="9" viewBox="0 0 6 9"><path d="M6 0 L0 4.5 L6 9 Z" fill="#4b5a70"/></svg>
<div style="left:98px;top:538px;width:597px;height:15px;background:#e3ebf5;border:1px solid #8ea2bc;border-radius:3px;box-sizing:border-box;background:linear-gradient(#eef3f9,#dce5f1 50%,#c9d7ea);"></div>
<svg style="left:393px;top:542px" width="8" height="7" viewBox="0 0 8 7"><path d="M0.5 0 V7 M2.5 0 V7 M4.5 0 V7 M6.5 0 V7" stroke="#7a8aa0" stroke-width="1"/></svg>
<svg style="left:758px;top:541px" width="6" height="10" viewBox="0 0 6 10"><path d="M0 0 L6 5 L0 10 Z" fill="#4b5a70"/></svg>
<div style="left:26px;top:554px;width:744px;height:1px;background:#8c9db3;"></div>
<div style="left:769px;top:537px;width:1px;height:18px;background:#8c9db3;"></div>
<div style="left:771px;top:537px;width:370px;height:17px;background:#dce5f1;background:linear-gradient(#cbd8e9,#dfe8f3);"></div>
<div style="left:771px;top:537px;width:18px;height:17px;background:#c8d7eb;"></div>
<svg style="left:775px;top:542px" width="10" height="8" viewBox="0 0 10 8"><rect x="0" y="0" width="1.3" height="8" fill="#4a5a76"/><path d="M5.3 0 L1.3 4 L5.3 8 Z M9.3 0 L5.3 4 L9.3 8 Z" fill="#4a5a76"/></svg>
<div style="left:789px;top:537px;width:27px;height:17px;background:#ffffff;"></div>
<div style="left:793.5px;top:540px;font-size:11px;line-height:13px;color:#000;font-weight:400;white-space:pre;letter-spacing:0.3px;">8/9</div>
<div style="left:816px;top:537px;width:17px;height:17px;background:#c8d7eb;"></div>
<svg style="left:820px;top:542px" width="10" height="8" viewBox="0 0 10 8"><path d="M0 0 L4 4 L0 8 Z M4 0 L8 4 L4 8 Z" fill="#4a5a76"/><rect x="8" y="0" width="1.3" height="8" fill="#4a5a76"/></svg>
<svg style="left:839px;top:541px" width="6" height="10" viewBox="0 0 6 10"><path d="M6 0 L0 5 L6 10 Z" fill="#a9b5c7"/></svg>
<svg style="left:1129px;top:541px" width="6" height="10" viewBox="0 0 6 10"><path d="M0 0 L6 5 L0 10 Z" fill="#a9b5c7"/></svg>
<div style="left:789px;top:554px;width:352px;height:1px;background:#a9b8cb;"></div>
<div style="left:12px;top:564px;font-size:11px;line-height:13px;color:#1a1a1a;font-weight:400;white-space:pre;letter-spacing:0.1px;">Catalogo premi attivo:</div>
<div style="left:144px;top:564px;font-size:11px;line-height:13px;color:#1a1a1a;font-weight:400;white-space:pre;letter-spacing:0.1px;">nessuno</div>
</body></html>
